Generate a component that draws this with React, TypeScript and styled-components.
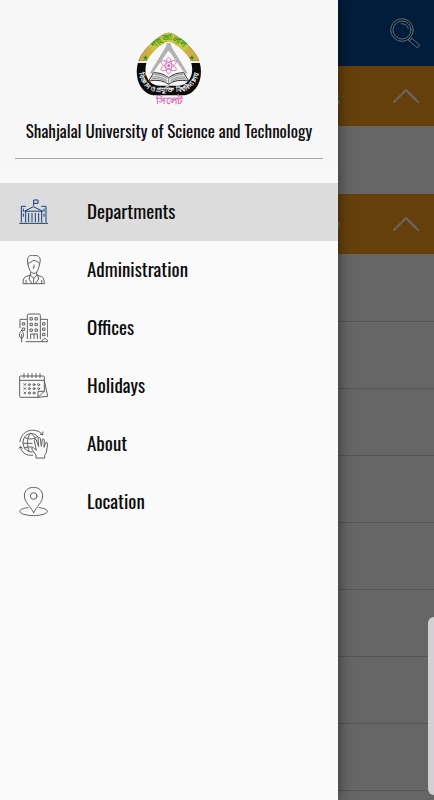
import React from "react";
import styled, { createGlobalStyle } from "styled-components";

const GlobalStyle = createGlobalStyle`
  * { box-sizing: border-box; }
  html, body { margin: 0; padding: 0; background: #fff; }
  body {
    font-family: "Oswald", "Liberation Sans Narrow", "Roboto Condensed", "Liberation Sans", sans-serif;
    color: #0c0c0c;
  }
`;

const Screen = styled.div`
  position: relative;
  height: 100vh;
  overflow: hidden;
`;

const TopBar = styled.header`
  display: flex;
  justify-content: flex-end;
  align-items: center;
  height: 66px;
  padding: 0 13px;
  background: #004c96;
`;

const SearchButton = styled.button`
  display: flex;
  padding: 0;
  border: 0;
  background: none;
  color: #fff;
`;

const SectionHeader = styled.button`
  display: flex;
  justify-content: flex-end;
  align-items: center;
  gap: 53px;
  width: 100%;
  height: 60px;
  padding: 0 15px;
  border: 0;
  background: #ffa01a;
  color: #fff;
  font: inherit;
  font-size: 19px;
`;

const List = styled.ul`
  margin: 0;
  padding: 0 0 1px;
  list-style: none;
`;

const ListRow = styled.li`
  height: 67px;

  & + & {
    border-top: 1px solid #d4d4d4;
  }
`;

const Scrim = styled.div`
  position: absolute;
  inset: 0;
  background: rgba(0, 0, 0, 0.6);
`;

const EdgeHandle = styled.div`
  position: absolute;
  right: 0;
  bottom: 5px;
  width: 6px;
  height: 178px;
  border-radius: 6px 0 0 6px;
  background: #d2d0d2;
`;

const Drawer = styled.aside`
  position: absolute;
  top: 0;
  bottom: 0;
  left: 0;
  width: calc(100% - 96px);
  background: #fafafa;
  box-shadow: 0 0 14px rgba(0, 0, 0, 0.5);
`;

const DrawerHeader = styled.div`
  display: flex;
  flex-direction: column;
  align-items: center;
  height: 183px;
  padding: 31px 15px 0;
  background: linear-gradient(#f7f7f7 90%, #fafafa);
`;

const Title = styled.h1`
  margin: 8px 0 0;
  font-size: 17px;
  line-height: 24px;
  font-weight: 400;
  white-space: nowrap;
`;

const Divider = styled.hr`
  width: 100%;
  height: 1px;
  margin: 15px 0 0;
  border: 0;
  background: #a6a6a6;
`;

const MenuLink = styled.a<{ $active?: boolean }>`
  display: flex;
  align-items: center;
  gap: 39px;
  height: 58px;
  padding: 0 18px;
  background: ${(p) => (p.$active ? "#dcdcdc" : "transparent")};
  color: #0c0c0c;
  text-decoration: none;
`;

const MenuLabel = styled.span`
  padding-bottom: 4px;
  font-size: 19px;
  line-height: 28px;
`;

const CrestSvg = styled.svg`
  flex: none;
  overflow: visible;
`;

const Glyph = styled.svg<{ $color?: string; $weight?: number }>`
  flex: none;
  fill: none;
  stroke: ${(p) => p.$color ?? "#606060"};
  stroke-width: ${(p) => p.$weight ?? 3};
  stroke-linecap: round;
  stroke-linejoin: round;
`;

const Crest = () => (
  <CrestSvg width="66" height="80" viewBox="33 18 198 240" role="img" aria-label="University crest">
    <defs>
      <path id="crest-top" d="M62 96 C78 74 112 46 131 46 C150 46 184 74 200 96" />
      <path id="crest-bottom" d="M41 116 C36 160 58 202 104 202 L158 202 C204 202 226 160 221 116" />
    </defs>
    <path d="M39 113 L224 113 C237 158 216 211 170 211 L93 211 C47 211 26 158 39 113Z" fill="#0b0b0b" />
    <path d="M41 108 C51 78 88 42 118 27 Q131 21 144 27 C174 42 212 78 222 108Z" fill="#cdb040" stroke="#8d6a35" strokeWidth="2" />
    <path d="M118 27 Q131 21 144 27 C160 35 178 50 192 64 L178 80 Q150 50 131 50 Q112 50 84 80 L70 64 C84 50 102 35 118 27Z" fill="#c9c63e" />
    <path d="M131 50 C112 52 76 84 66 108 C52 150 72 182 104 182 L158 182 C190 182 211 150 197 108 C187 84 150 52 131 50Z" fill="#f8f8f8" />
    <path d="M38 111H66M197 111H225" stroke="#f8f8f8" strokeWidth="5" />
    <path d="M129 55 L74 145 L82 146 L131 76 L180 146 L188 145 L133 55Z" fill="#b2b2b2" />
    <path d="M126 54h10l5 17-10 8-10-8z" fill="#b2b2b2" />
    <g fill="none" stroke="#d850a8" strokeWidth="2">
      <ellipse cx="131" cy="122" rx="26" ry="9" transform="rotate(30 131 122)" />
      <ellipse cx="131" cy="122" rx="24" ry="9" transform="rotate(90 131 122)" />
      <ellipse cx="131" cy="122" rx="26" ry="9" transform="rotate(150 131 122)" />
    </g>
    <circle cx="131" cy="122" r="4" fill="#d850a8" />
    <path d="M86 143 Q112 143 131 158 Q150 143 176 143 L191 168 Q152 161 131 178 Q110 161 71 168Z" fill="#e8e8e8" stroke="#333" strokeWidth="3" />
    <path d="M131 158V178M88 149Q111 147 126 161M82 156Q109 153 125 167M79 162Q108 157 124 172M174 149Q151 147 136 161M180 156Q153 153 137 167M183 162Q154 157 138 172" fill="none" stroke="#888" strokeWidth="3" />
    <path d="M62 90l2 5 5 1-4 4 1 5-5-3-4 3 1-5-4-4 6-1zM201 90l2 5 5 1-4 4 1 5-5-3-4 3 1-5-4-4 6-1z" fill="#2f8a2c" />
    <text fill="#2f9a25" fontSize="24" fontWeight="700" textAnchor="middle">
      <textPath href="#crest-top" startOffset="50%">শাহজালাল</textPath>
    </text>
    <text fill="#fff" fontSize="20" fontWeight="700" textAnchor="middle">
      <textPath href="#crest-bottom" startOffset="50%">বিজ্ঞান ও প্রযুক্তি বিশ্ববিদ্যালয়</textPath>
    </text>
    <text x="131" y="236" fill="#dc62b2" fontSize="29" fontWeight="700" textAnchor="middle">সিলেট</text>
  </CrestSvg>
);

const BuildingIcon = () => (
  <Glyph width="30" height="30" viewBox="24 21 90 90" $color="#123f80">
    <path d="M29 100H113M34 96V49H47M108 96V49H95M47 96V63M95 96V63M45 63L70 50L97 63ZM71 46V30H84V40H71M56 70V95M66 70V95M76 70V95M86 70V95M40 57V64M40 72V79M102 57V64M102 72V79" />
  </Glyph>
);

const PersonIcon = () => (
  <Glyph width="30" height="30" viewBox="24 27 90 90">
    <path d="M54 57C47 30 61 25 72 29C87 25 96 38 88 56M54 51C61 54 66 43 72 43C80 43 82 50 88 51M55 57C57 75 65 82 72 82C79 82 85 75 88 57M72 57V66H69M62 79V87L47 92Q39 96 39 113H103Q103 96 95 92L80 87V79M61 87L71 97L81 87M60 88L57 99L66 113M83 88L86 99L76 113M71 97V112M48 103V113M95 103V113" />
  </Glyph>
);

const OfficeIcon = () => (
  <Glyph width="30" height="30" viewBox="24 27 90 90">
    <path d="M52 104V34Q52 30 56 30H87Q91 30 91 34V104M50 46H30V71M93 46H113V98M48 113H97M62 104V90H82V104M72 90V104M35 114V91M35 79C26 88 26 99 35 103C43 99 43 88 35 79M96 112Q96 106 101 106Q104 100 109 106Q113 107 113 112Z" />
    <path d="M61 41h6v7h-6zM76 41h6v7h-6zM61 58h6v7h-6zM76 58h6v7h-6zM61 75h6v7h-6zM76 75h6v7h-6zM38 56h6v7h-6zM38 72h6v7h-6zM99 56h6v7h-6zM99 72h6v7h-6zM99 88h6v7h-6z" />
  </Glyph>
);

const CalendarIcon = () => (
  <Glyph width="30" height="30" viewBox="24 27 90 90">
    <path d="M84 106H32Q29 106 29 103V45Q29 42 32 42H100Q103 42 103 45V88L84 106V88H103M29 55H103M103 56L113 103L84 106M42 35V47M54 35V47M66 35V47M78 35V47M90 35V47" />
    <path d="M42 65l5 5m0-5l-5 5M42 77l5 5m0-5l-5 5M42 90l5 5m0-5l-5 5" />
    <circle cx="58" cy="68" r="3" /><circle cx="72" cy="68" r="3" /><circle cx="86" cy="68" r="3" />
    <circle cx="58" cy="80" r="3" /><circle cx="72" cy="80" r="3" /><circle cx="86" cy="80" r="3" />
    <circle cx="58" cy="93" r="3" /><circle cx="72" cy="93" r="3" />
  </Glyph>
);

const GlobeIcon = () => (
  <Glyph width="30" height="30" viewBox="24 27 90 90">
    <path d="M30 65C33 31 75 18 98 44M98 44L91 43M98 44L99 36M31 80C34 97 48 108 68 106M31 80L37 84M31 80L27 85" />
    <path d="M86 55C75 32 45 38 40 60C36 81 49 97 67 96M61 40C50 52 50 80 58 95M62 40C72 46 76 54 76 60M43 52C56 59 70 59 83 50M39 70H66M43 84Q54 79 66 81" />
    <path fill="#fafafa" d="M78 113V106L66 88Q63 81 70 83L79 91L73 61Q74 55 79 60L86 80L84 55Q87 50 91 55L94 79L97 58Q101 54 103 60L102 82L107 68Q112 66 113 72L109 98L104 106V113Z" />
  </Glyph>
);

const LocationIcon = () => (
  <Glyph width="30" height="30" viewBox="24 27 90 90">
    <path d="M71 104C63 87 43 72 43 54C43 37 55 28 71 28C87 28 98 39 98 54C98 72 79 87 71 104ZM54 89C19 92 19 111 70 113C123 111 123 92 87 89" />
    <circle cx="71" cy="54" r="10" />
  </Glyph>
);

const SearchIcon = () => (
  <Glyph width="32" height="32" viewBox="195 48 96 96" $color="currentColor">
    <circle cx="234" cy="87" r="34" />
    <circle cx="234" cy="87" r="27" />
    <path d="M232 68Q248 68 253 83M253 116L259 109L284 129Q290 137 281 139Q276 140 273 135ZM257 119L263 113" />
  </Glyph>
);

const ChevronUp = () => (
  <Glyph width="26" height="16" viewBox="0 0 26 16" $color="currentColor" $weight={2}>
    <path d="M1 14L13 2L25 14" />
  </Glyph>
);

const menu = [
  { label: "Departments", Icon: BuildingIcon },
  { label: "Administration", Icon: PersonIcon },
  { label: "Offices", Icon: OfficeIcon },
  { label: "Holidays", Icon: CalendarIcon },
  { label: "About", Icon: GlobeIcon },
  { label: "Location", Icon: LocationIcon },
];

const sections = [
  { title: "Sciences", rows: 1 },
  { title: "Technology", rows: 9 },
];

export default function App() {
  return (
    <Screen>
      <GlobalStyle />
      <main>
        <TopBar>
          <SearchButton aria-label="Search"><SearchIcon /></SearchButton>
        </TopBar>
        {sections.map((section) => (
          <section key={section.title}>
            <SectionHeader aria-expanded="true">
              {section.title}
              <ChevronUp />
            </SectionHeader>
            <List>
              {Array.from({ length: section.rows }, (_, i) => <ListRow key={i} />)}
            </List>
          </section>
        ))}
      </main>
      <Scrim />
      <EdgeHandle />
      <Drawer>
        <DrawerHeader>
          <Crest />
          <Title>Shahjalal University of Science and Technology</Title>
          <Divider />
        </DrawerHeader>
        <nav>
          {menu.map(({ label, Icon }, i) => (
            <MenuLink key={label} href={"#" + label.toLowerCase()} $active={i === 0}>
              <Icon />
              <MenuLabel>{label}</MenuLabel>
            </MenuLink>
          ))}
        </nav>
      </Drawer>
    </Screen>
  );
}
